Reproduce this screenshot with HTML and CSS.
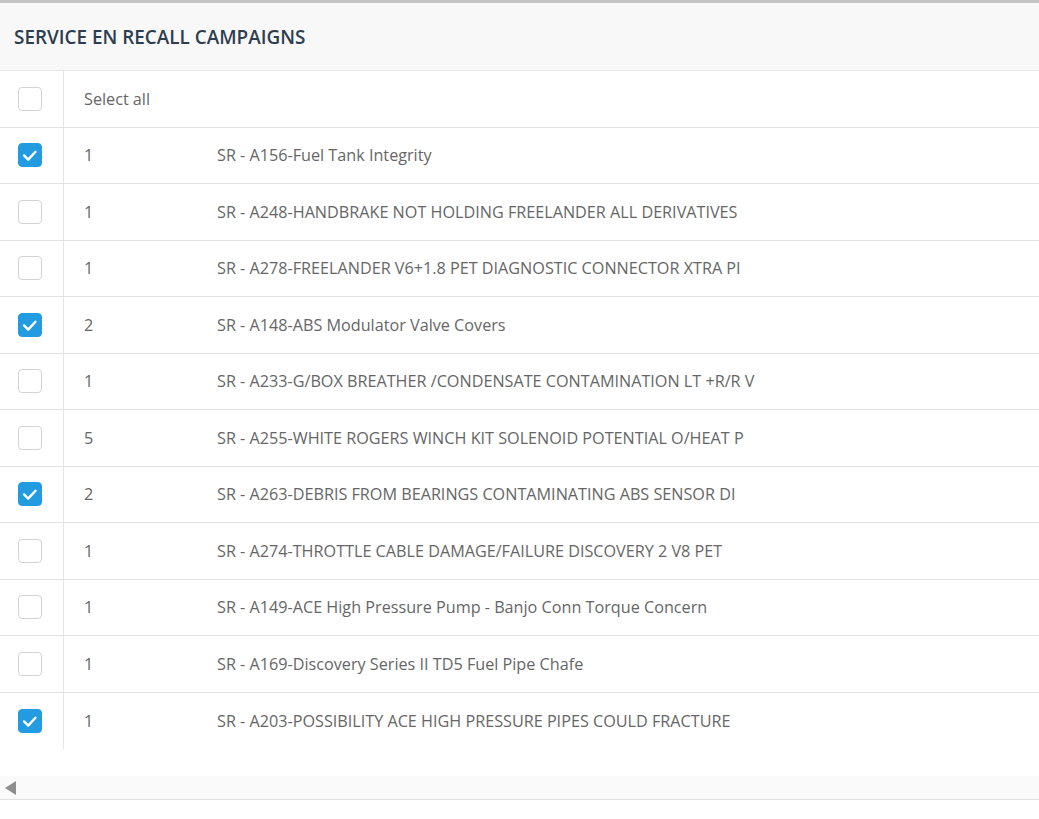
FILE: index.html
```html
<!DOCTYPE html>
<html>
<head>
<meta charset="utf-8">
<link rel="stylesheet" href="styles.css">
</head>
<body>
<div class="topbar"></div>
<div class="panel">
  <div class="panel-head">SERVICE EN RECALL CAMPAIGNS</div>
  <div class="table">
    <div class="row">
      <div class="cell-check"><span class="cb"></span></div>
      <div class="cell-all">Select all</div>
    </div>
    <div class="row">
      <div class="cell-check"><span class="cb on"><svg viewBox="0 0 24 24"><path d="M5.5 12.5 L10 17 L18 8.5"/></svg></span></div>
      <div class="cell-num">1</div>
      <div class="cell-desc">SR - A156-Fuel Tank Integrity</div>
    </div>
    <div class="row">
      <div class="cell-check"><span class="cb"></span></div>
      <div class="cell-num">1</div>
      <div class="cell-desc">SR - A248-HANDBRAKE NOT HOLDING FREELANDER ALL DERIVATIVES</div>
    </div>
    <div class="row">
      <div class="cell-check"><span class="cb"></span></div>
      <div class="cell-num">1</div>
      <div class="cell-desc">SR - A278-FREELANDER V6+1.8 PET DIAGNOSTIC CONNECTOR XTRA PI</div>
    </div>
    <div class="row">
      <div class="cell-check"><span class="cb on"><svg viewBox="0 0 24 24"><path d="M5.5 12.5 L10 17 L18 8.5"/></svg></span></div>
      <div class="cell-num">2</div>
      <div class="cell-desc">SR - A148-ABS Modulator Valve Covers</div>
    </div>
    <div class="row">
      <div class="cell-check"><span class="cb"></span></div>
      <div class="cell-num">1</div>
      <div class="cell-desc">SR - A233-G/BOX BREATHER /CONDENSATE CONTAMINATION LT +R/R V</div>
    </div>
    <div class="row">
      <div class="cell-check"><span class="cb"></span></div>
      <div class="cell-num">5</div>
      <div class="cell-desc">SR - A255-WHITE ROGERS WINCH KIT SOLENOID POTENTIAL O/HEAT P</div>
    </div>
    <div class="row">
      <div class="cell-check"><span class="cb on"><svg viewBox="0 0 24 24"><path d="M5.5 12.5 L10 17 L18 8.5"/></svg></span></div>
      <div class="cell-num">2</div>
      <div class="cell-desc">SR - A263-DEBRIS FROM BEARINGS CONTAMINATING ABS SENSOR DI</div>
    </div>
    <div class="row">
      <div class="cell-check"><span class="cb"></span></div>
      <div class="cell-num">1</div>
      <div class="cell-desc">SR - A274-THROTTLE CABLE DAMAGE/FAILURE DISCOVERY 2 V8 PET</div>
    </div>
    <div class="row">
      <div class="cell-check"><span class="cb"></span></div>
      <div class="cell-num">1</div>
      <div class="cell-desc">SR - A149-ACE High Pressure Pump - Banjo Conn Torque Concern</div>
    </div>
    <div class="row">
      <div class="cell-check"><span class="cb"></span></div>
      <div class="cell-num">1</div>
      <div class="cell-desc">SR - A169-Discovery Series II TD5 Fuel Pipe Chafe</div>
    </div>
    <div class="row last">
      <div class="cell-check"><span class="cb on"><svg viewBox="0 0 24 24"><path d="M5.5 12.5 L10 17 L18 8.5"/></svg></span></div>
      <div class="cell-num">1</div>
      <div class="cell-desc">SR - A203-POSSIBILITY ACE HIGH PRESSURE PIPES COULD FRACTURE</div>
    </div>
  </div>
  <div class="scrollbar"><span class="arrow"></span></div>
</div>
</body>
</html>
```
FILE: styles.css
```css
html, body {
  margin: 0;
  padding: 0;
  background: #ffffff;
  font-family: "Open Sans", "Liberation Sans", sans-serif;
}
.topbar {
  height: 3px;
  background: #c4c4c4;
}
.panel {
  width: 1039px;
}
.panel-head {
  height: 68px;
  box-sizing: border-box;
  background: #f8f8f8;
  border-bottom: 1px solid #e6e6e6;
  padding-left: 14px;
  display: flex;
  align-items: center;
  font-size: 18.9px;
  font-weight: 600;
  color: #2d3e50;
}
.table {
  display: flex;
  flex-direction: column;
}
.row {
  display: flex;
  height: 56.5px;
  box-sizing: border-box;
  border-bottom: 1px solid #e2e2e2;
  font-size: 16.2px;
  color: #666666;
}
.row.last {
  border-bottom: none;
}
.cell-check {
  width: 64px;
  flex: none;
  border-right: 1px solid #e6e6e6;
  display: flex;
  align-items: center;
  padding-left: 18px;
  box-sizing: border-box;
}
.cb {
  width: 24px;
  height: 24px;
  box-sizing: border-box;
  border: 1px solid #d3d3d3;
  border-radius: 4px;
  background: #fff;
  display: block;
}
.cb.on {
  background: #239be0;
  border-color: #239be0;
}
.cb svg {
  display: block;
  width: 22px;
  height: 22px;
}
.cb svg path {
  fill: none;
  stroke: #ffffff;
  stroke-width: 2.6;
  stroke-linecap: round;
  stroke-linejoin: round;
}
.cell-all, .cell-num, .cell-desc {
  display: flex;
  align-items: center;
  white-space: nowrap;
}
.cell-all {
  padding-left: 20px;
}
.cell-num {
  padding-left: 20px;
  width: 153px;
  box-sizing: border-box;
  flex: none;
}
.scrollbar {
  margin-top: 27px;
  height: 23px;
  background: #fafafa;
  border-bottom: 1px solid #e2e2e2;
  display: flex;
  align-items: center;
  padding-left: 5px;
}
.arrow {
  width: 0;
  height: 0;
  border-top: 7px solid transparent;
  border-bottom: 7px solid transparent;
  border-right: 11px solid #8f8f8f;
}
```
